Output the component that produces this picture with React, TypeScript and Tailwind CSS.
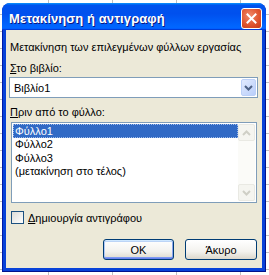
import React from "react";

const ui = { fontFamily: '"Liberation Sans", Arial, sans-serif' };

function ScrollBtn({ dir }: { dir: "up" | "down" }) {
  return (
    <div className="w-[17px] h-[17px] rounded-[2px] border border-[#e9e9e3] bg-[#f5f5f0] flex items-center justify-center">
      <svg width="9" height="6" viewBox="0 0 9 6">
        {dir === "up" ? (
          <path d="M1 5 L4.5 1.5 L8 5" stroke="#cfcfc6" strokeWidth="2" fill="none" />
        ) : (
          <path d="M1 1 L4.5 4.5 L8 1" stroke="#cfcfc6" strokeWidth="2" fill="none" />
        )}
      </svg>
    </div>
  );
}

export default function App() {
  return (
    <div
      className="w-[269px] h-[275px] overflow-hidden bg-white bg-[linear-gradient(to_right,#c0c0c0_1px,transparent_1px),linear-gradient(to_bottom,#c0c0c0_1px,transparent_1px)] bg-[size:64px_17px] bg-[position:48px_14px] pt-[3px] pl-[2px]"
      style={ui}
    >
      <div className="w-[264px] h-[269px] flex flex-col rounded-t-[8px] bg-[#0842d8] border border-[#0019a8] border-t-[#0831d9] border-b-[#00138c] border-r-[#00138c]">
        {/* Title bar */}
        <div className="h-[27px] shrink-0 -mx-[1px] -mt-[1px] rounded-t-[8px] bg-[linear-gradient(180deg,#0997ff,#0053ee_8%,#0050ee_40%,#0066ff_88%,#0066ff_93%,#005bff_95%,#003dd7_96%,#003dd7)] flex items-center pl-[7px] pr-[4px]">
          <span className="flex-1 text-white font-bold text-[13px] leading-none pt-[3px] tracking-[0.1px] [text-shadow:1px_1px_#0a1883]">
            Μετακίνηση ή αντιγραφή
          </span>
          <div className="w-[21px] h-[21px] mt-[4px] rounded-[3px] border border-white bg-[radial-gradient(circle_at_40%_35%,#f0896a,#e0552f_55%,#c63a17)] flex items-center justify-center">
            <svg width="11" height="11" viewBox="0 0 11 11">
              <path d="M1.5 1.5 L9.5 9.5 M9.5 1.5 L1.5 9.5" stroke="white" strokeWidth="2" strokeLinecap="square" />
            </svg>
          </div>
        </div>
        {/* Content */}
        <div className="flex-1 mx-[3px] mb-[3px] bg-[#ece9d8] flex flex-col text-[11px] leading-[12px] text-black">
          <div className="mt-[11px] pl-[4px] h-[12px]">Μετακίνηση των επιλεγμένων φύλλων εργασίας</div>
          <div className="mt-[9px] pl-[4px] h-[12px]">
            <span className="underline underline-offset-[1px]">Σ</span>το βιβλίο:
          </div>
          {/* Combobox */}
          <div className="mt-[3px] ml-[3px] w-[249px] h-[21px] border border-[#7f9db9] bg-white flex items-center p-[1px]">
            <span className="flex-1 pl-[3px]">Βιβλίο1</span>
            <div className="w-[15px] h-[17px] rounded-[2px] border border-[#bcd0f8] bg-[linear-gradient(135deg,#e1eafe,#b9cefa)] flex items-center justify-center">
              <svg width="9" height="6" viewBox="0 0 9 6">
                <path d="M1 1 L4.5 4.5 L8 1" stroke="#4d6185" strokeWidth="2" fill="none" />
              </svg>
            </div>
          </div>
          <div className="mt-[8px] pl-[4px] h-[12px]">
            <span className="underline underline-offset-[1px]">Π</span>ριν από το φύλλο:
          </div>
          {/* Listbox */}
          <div className="mt-[4px] ml-[5px] w-[246px] h-[81px] border border-[#7f9db9] bg-white flex p-[1px]">
            <div className="flex-1 flex flex-col">
              <div className="h-[14px] bg-[#316ac5] text-white pl-[1px] border border-dotted border-[#9fbcea] leading-[12px]">Φύλλο1</div>
              <div className="h-[13px] pl-[2px] leading-[13px]">Φύλλο2</div>
              <div className="h-[14px] pl-[2px] leading-[14px]">Φύλλο3</div>
              <div className="h-[13px] pl-[2px] leading-[13px]">(μετακίνηση στο τέλος)</div>
            </div>
            <div className="w-[17px] bg-[#fbfbf8] flex flex-col justify-between">
              <ScrollBtn dir="up" />
              <ScrollBtn dir="down" />
            </div>
          </div>
          {/* Checkbox */}
          <div className="mt-[8px] ml-[5px] flex items-center h-[13px]">
            <div className="w-[13px] h-[13px] border border-[#1c5180] bg-[linear-gradient(135deg,#dcdcd7,#ffffff)]" />
            <span className="ml-[4px]">
              <span className="underline underline-offset-[1px]">Δ</span>ημιουργία αντιγράφου
            </span>
          </div>
          {/* Buttons */}
          <div className="mt-[15px] flex justify-end gap-[11px] pr-[5px]">
            <div className="w-[71px] h-[21px] rounded-[3px] border border-[#003c74] bg-[linear-gradient(180deg,#ffffff,#f3f2ee_60%,#dcd8cc)] shadow-[inset_0_1px_#cee7ff,inset_0_-1px_#6982ee,inset_1px_0_#b0c8f6,inset_-1px_0_#8aa5ee,inset_0_2px_#bcd4f6,inset_0_-2px_#7d99f1] flex items-center justify-center text-[11px]">
              OK
            </div>
            <div className="w-[72px] h-[21px] rounded-[3px] border border-[#003c74] bg-[linear-gradient(180deg,#ffffff,#f3f2ee_60%,#dcd8cc)] flex items-center justify-center text-[11px]">
              Άκυρο
            </div>
          </div>
        </div>
      </div>
    </div>
  );
}
